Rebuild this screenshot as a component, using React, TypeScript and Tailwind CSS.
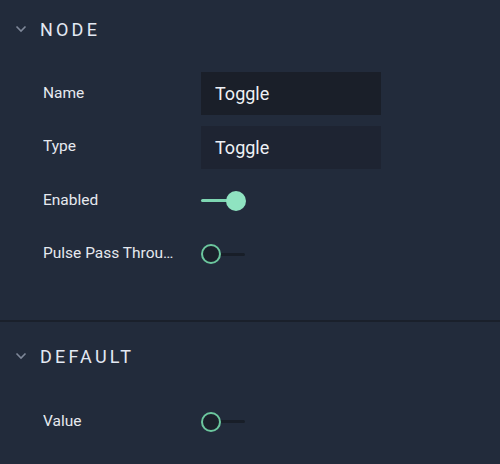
import React from 'react';

const font = { fontFamily: 'Roboto, "Noto Sans", sans-serif' };

const Chevron: React.FC = () => (
    <svg width="12" height="8" viewBox="0 0 12 8" className="ml-[15px] mr-[13px]">
        <path d="M1.5 1.5 L6 6 L10.5 1.5" fill="none" stroke="#7f8899" strokeWidth="1.6" />
    </svg>
);

const SectionHeader: React.FC<{ title: string }> = ({ title }) => (
    <div className="flex items-center h-[58px]">
        <Chevron />
        <span className="text-[18px] tracking-[3.2px] text-[#e3e9f3]">{title}</span>
    </div>
);

const Label: React.FC<{ text: string }> = ({ text }) => (
    <div className="w-[134px] mr-[24px] truncate text-[15.5px] text-[#e6e9ef]">{text}</div>
);

const TextBox: React.FC<{ value: string; dark?: boolean }> = ({ value, dark }) => (
    <div className={`w-[180px] h-[43px] flex items-center pl-[14px] text-[18px] text-[#eef1f5] ${dark ? 'bg-[#1a1f29]' : 'bg-[#1e2432]'}`}>
        {value}
    </div>
);

const Switch: React.FC<{ on: boolean }> = ({ on }) =>
    on ? (
        <div className="relative w-[46px] h-[20px] flex items-center">
            <div className="h-[3px] w-[34px] rounded-full bg-[#7ed6b2]" />
            <div className="absolute left-[25px] top-0 w-[20px] h-[20px] rounded-full bg-[#8fe3c1]" />
        </div>
    ) : (
        <div className="relative w-[46px] h-[20px] flex items-center">
            <div className="ml-[16px] h-[3px] w-[28px] rounded-full bg-[#181e28]" />
            <div className="absolute left-0 top-0 w-[20px] h-[20px] rounded-full border-[2.5px] border-[#6cc79e] bg-[#1b212b]" />
        </div>
    );

const Row: React.FC<{ label: string; children: React.ReactNode }> = ({ label, children }) => (
    <div className="flex items-center h-[43px] pl-[43px]">
        <Label text={label} />
        {children}
    </div>
);

export default function App() {
    return (
        <div className="w-[500px] h-[464px] bg-[#222b3b] overflow-hidden" style={font}>
            <div className="h-[320px]">
                <SectionHeader title="NODE" />
                <div className="flex flex-col gap-[10.5px] pt-[14px]">
                    <Row label="Name">
                        <TextBox value="Toggle" dark />
                    </Row>
                    <Row label="Type">
                        <TextBox value="Toggle" />
                    </Row>
                    <Row label="Enabled">
                        <Switch on />
                    </Row>
                    <Row label="Pulse Pass Through">
                        <Switch on={false} />
                    </Row>
                </div>
            </div>
            <div className="h-[2px] bg-[#1a202b]" />
            <div className="pt-[5px]">
                <SectionHeader title="DEFAULT" />
                <div className="pt-[15px]">
                    <Row label="Value">
                        <Switch on={false} />
                    </Row>
                </div>
            </div>
        </div>
    );
}
